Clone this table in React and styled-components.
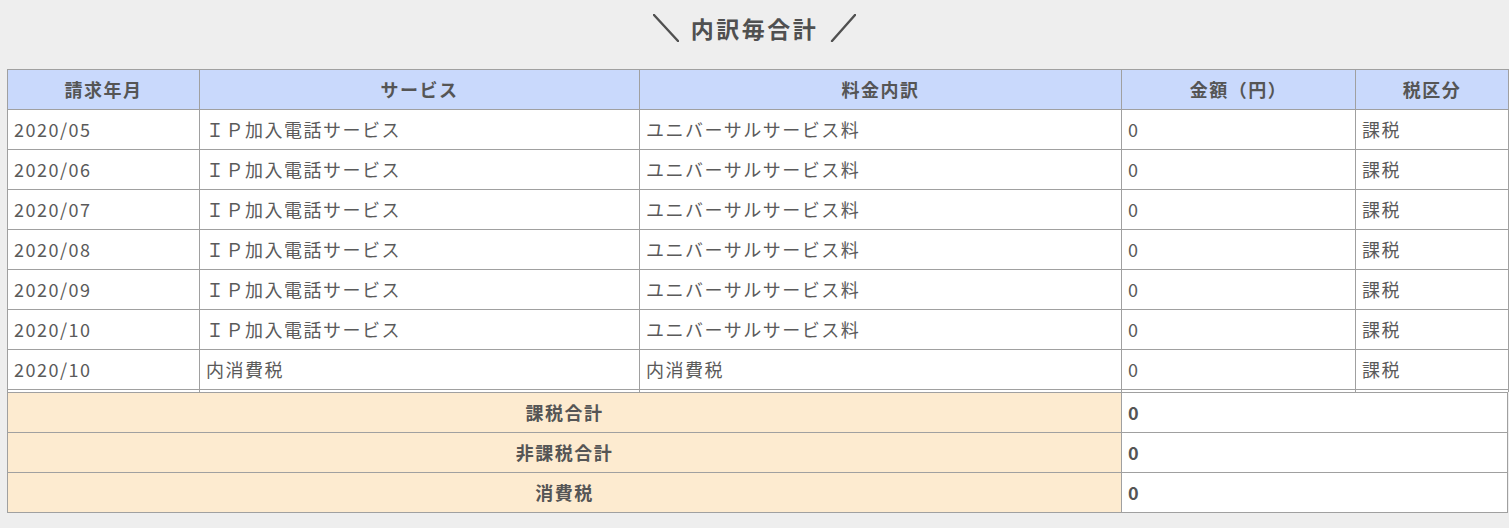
import React from 'react';
import styled, { createGlobalStyle } from 'styled-components';

const rows = [
    { month: "2020/05", service: "ＩＰ加入電話サービス", item: "ユニバーサルサービス料", amount: "0", tax: "課税" },
    { month: "2020/06", service: "ＩＰ加入電話サービス", item: "ユニバーサルサービス料", amount: "0", tax: "課税" },
    { month: "2020/07", service: "ＩＰ加入電話サービス", item: "ユニバーサルサービス料", amount: "0", tax: "課税" },
    { month: "2020/08", service: "ＩＰ加入電話サービス", item: "ユニバーサルサービス料", amount: "0", tax: "課税" },
    { month: "2020/09", service: "ＩＰ加入電話サービス", item: "ユニバーサルサービス料", amount: "0", tax: "課税" },
    { month: "2020/10", service: "ＩＰ加入電話サービス", item: "ユニバーサルサービス料", amount: "0", tax: "課税" },
    { month: "2020/10", service: "内消費税", item: "内消費税", amount: "0", tax: "課税" },
];

const totals = [
    { label: "課税合計", value: "0" },
    { label: "非課税合計", value: "0" },
    { label: "消費税", value: "0" },
];

const colWidths = [192, 440, 482, 234, 153];

const GlobalStyle = createGlobalStyle`
    body {
        margin: 0;
        background: #eeeeee;
        font-family: "Noto Sans CJK JP", "Noto Sans", sans-serif;
        color: #555;
    }
`;

const App = () => {
    return (<Page>
        <GlobalStyle />
        <Title>
            <Slash viewBox="0 0 26 28"><line x1="1" y1="1" x2="25" y2="27" /></Slash>
            <TitleText>内訳毎合計</TitleText>
            <Slash viewBox="0 0 26 28"><line x1="2" y1="27" x2="25" y2="1" /></Slash>
        </Title>
        <Table>
            <colgroup>
                {colWidths.map((w, i) => <col key={i} style={{ width: w }} />)}
            </colgroup>
            <thead>
                <tr>
                    <Th>請求年月</Th>
                    <Th>サービス</Th>
                    <Th>料金内訳</Th>
                    <Th>金額（円）</Th>
                    <Th>税区分</Th>
                </tr>
            </thead>
            <tbody>
                {rows.map((r, i) => (
                    <tr key={i}>
                        <Td>{r.month}</Td>
                        <Td>{r.service}</Td>
                        <Td>{r.item}</Td>
                        <Td>{r.amount}</Td>
                        <Td>{r.tax}</Td>
                    </tr>
                ))}
                <tr>
                    {colWidths.map((w, i) => <GapCell key={i} />)}
                </tr>
            </tbody>
        </Table>
        <TotalTable>
            <colgroup>
                <col style={{ width: 1114 }} />
                <col />
            </colgroup>
            <tbody>
                {totals.map((t, i) => (
                    <tr key={i}>
                        <TotalLabel>{t.label}</TotalLabel>
                        <TotalValue>{t.value}</TotalValue>
                    </tr>
                ))}
            </tbody>
        </TotalTable>
    </Page>);
}

export default App;

const Page = styled.div`
    padding: 0 1px 16px 7px;
`

const Title = styled.div`
    height: 69px;
    display: flex;
    align-items: center;
    justify-content: center;
    gap: 12px;
    padding-right: 6px;
    box-sizing: border-box;
    padding-bottom: 13px;
`

const TitleText = styled.h2`
    margin: 0;
    font-size: 23px;
    font-weight: 700;
    letter-spacing: 2.5px;
    color: #505050;
`

const Slash = styled.svg`
    width: 26px;
    height: 28px;
    stroke: #505050;
    stroke-width: 2.4;
    stroke-linecap: round;
`

const Table = styled.table`
    width: 1501px;
    border-collapse: collapse;
    table-layout: fixed;
    border: 1px solid #a0a0a0;
    border-bottom: none;
`

const Th = styled.th`
    height: 38px;
    padding: 0 6px 1px;
    line-height: 24px;
    background: #c9d9fc;
    border: 1px solid #a0a0a0;
    font-size: 18px;
    font-weight: 700;
    letter-spacing: 1.5px;
    color: #555;
    text-align: center;
`

const Td = styled.td`
    height: 37px;
    padding: 0 6px 2px;
    line-height: 24px;
    background: #fff;
    border: 1px solid #a0a0a0;
    font-size: 18px;
    letter-spacing: 1.5px;
    color: #5a5a5a;
    white-space: nowrap;
`

const GapCell = styled.td`
    height: 2px;
    padding: 0;
    background: #fff;
    border-left: 1px solid #a0a0a0;
    border-right: 1px solid #a0a0a0;
`

const TotalTable = styled.table`
    width: 1501px;
    border-collapse: collapse;
    table-layout: fixed;
    border: 1px solid #a0a0a0;
`

const TotalLabel = styled.td`
    height: 38px;
    padding: 0 6px 1px;
    line-height: 24px;
    background: #fdebd0;
    border: 1px solid #a0a0a0;
    font-size: 18px;
    font-weight: 700;
    letter-spacing: 1.5px;
    text-align: center;
    color: #555;
`

const TotalValue = styled.td`
    height: 38px;
    padding: 0 6px 1px;
    line-height: 24px;
    background: #fff;
    border: 1px solid #a0a0a0;
    font-size: 18px;
    font-weight: 700;
    color: #555;
`
